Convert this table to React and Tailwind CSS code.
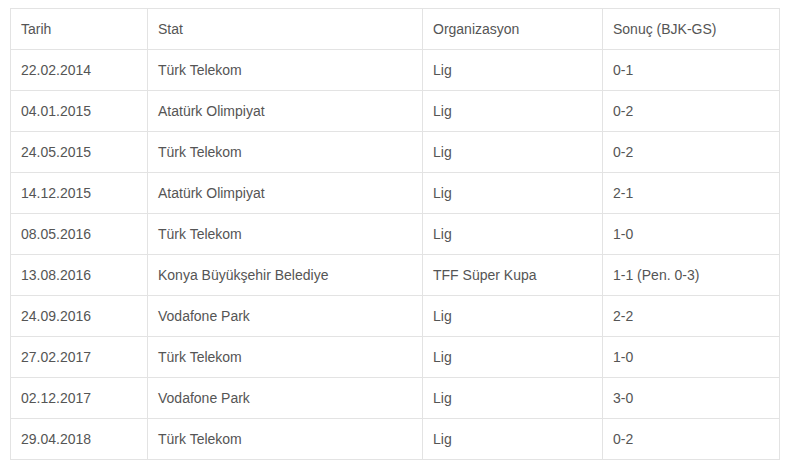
const rows = [
    ["22.02.2014", "Türk Telekom", "Lig", "0-1"],
    ["04.01.2015", "Atatürk Olimpiyat", "Lig", "0-2"],
    ["24.05.2015", "Türk Telekom", "Lig", "0-2"],
    ["14.12.2015", "Atatürk Olimpiyat", "Lig", "2-1"],
    ["08.05.2016", "Türk Telekom", "Lig", "1-0"],
    ["13.08.2016", "Konya Büyükşehir Belediye", "TFF Süper Kupa", "1-1 (Pen. 0-3)"],
    ["24.09.2016", "Vodafone Park", "Lig", "2-2"],
    ["27.02.2017", "Türk Telekom", "Lig", "1-0"],
    ["02.12.2017", "Vodafone Park", "Lig", "3-0"],
    ["29.04.2018", "Türk Telekom", "Lig", "0-2"],
];

const cell = "border border-[#e3e3e3] px-[10px] py-[10px] leading-[20px] text-left font-normal";

export default function App() {
    return (
        <div className="bg-white min-h-[476px] pt-[8px] pl-[10px] text-[14px] text-[#555555]" style={{ fontFamily: '"Liberation Sans", Arial, sans-serif' }}>
            <table className="border-collapse table-fixed w-[769px]">
                <colgroup>
                    <col className="w-[137px]" />
                    <col className="w-[275px]" />
                    <col className="w-[180px]" />
                    <col className="w-[177px]" />
                </colgroup>
                <thead>
                    <tr>
                        <th className={cell}>Tarih</th>
                        <th className={cell}>Stat</th>
                        <th className={cell}>Organizasyon</th>
                        <th className={cell}>Sonuç (BJK-GS)</th>
                    </tr>
                </thead>
                <tbody>
                    {rows.map((r, i) => (
                        <tr key={i}>
                            {r.map((c, j) => (
                                <td key={j} className={cell}>{c}</td>
                            ))}
                        </tr>
                    ))}
                </tbody>
            </table>
        </div>
    );
}
